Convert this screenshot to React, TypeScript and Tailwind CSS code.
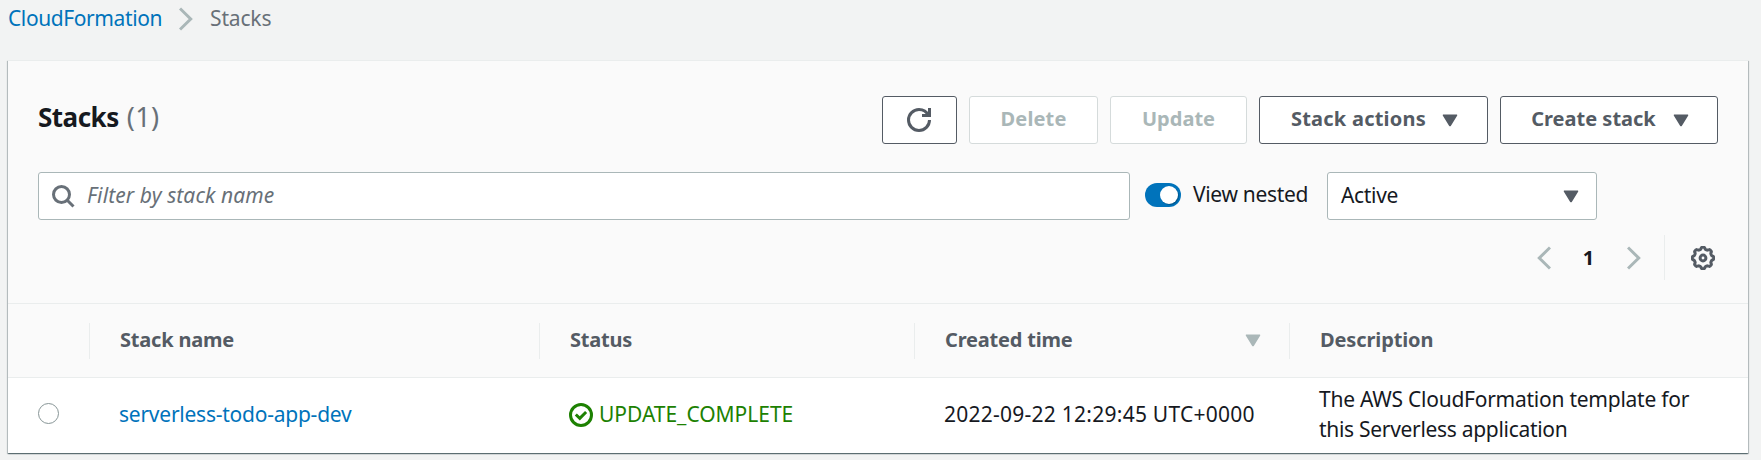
import React from "react";

function Caret({ className }: { className: string }) {
  return (
    <svg viewBox="0 0 16 13" className={`h-[13px] w-4 shrink-0 ${className}`} fill="currentColor">
      <path d="M1.5 0.5h13c.8 0 1 .7.6 1.2L8.8 11.9c-.4.6-1.2.6-1.6 0L.9 1.7C.5 1.2.7.5 1.5 .5z" />
    </svg>
  );
}

function Chevron({ left = false }: { left?: boolean }) {
  return (
    <svg viewBox="0 0 14 24" className="h-6 w-3.5 shrink-0 text-[#aab7b8]" fill="none" stroke="currentColor" strokeWidth="3">
      <path d={left ? "M13 1.5L2.3 12L13 22.5" : "M1 1.5L11.7 12L1 22.5"} />
    </svg>
  );
}

function RefreshIcon() {
  return (
    <svg viewBox="0 0 16 16" className="size-6" fill="none" stroke="currentColor" strokeWidth="2">
      <path d="M15 8c0 3.87-3.13 7-7 7s-7-3.13-7-7 3.13-7 7-7c2.79 0 5.2 1.63 6.33 4" />
      <path d="M10 5h5V0" />
    </svg>
  );
}

function SearchIcon() {
  return (
    <svg viewBox="0 0 24 24" className="size-6 text-[#687078]" fill="none" stroke="currentColor" strokeWidth="3">
      <circle cx="10.5" cy="10.5" r="8" />
      <path d="M16 16l6.500 6.500" />
    </svg>
  );
}

function GearIcon() {
  const points = Array.from({ length: 96 }, (_, i) => {
    const a = (i / 96) * Math.PI * 2;
    const r = 9.8 + 0.9 * Math.tanh(2.5 * Math.cos(8 * a));
    return `${(12 + r * Math.cos(a)).toFixed(2)},${(12 + r * Math.sin(a)).toFixed(2)}`;
  }).join(" ");
  return (
    <svg viewBox="0 0 24 24" className="size-6 text-[#545b64]" fill="none" stroke="currentColor" strokeWidth="3">
      <polygon points={points} strokeLinejoin="round" />
      <circle cx="12" cy="12" r="2.900" />
    </svg>
  );
}

function CheckIcon() {
  return (
    <svg viewBox="0 0 24 24" className="size-6 shrink-0" fill="none" stroke="currentColor" strokeWidth="3">
      <circle cx="12" cy="12" r="10.500" />
      <path d="M6.800 11.500l4 3.800 6.300-6.300" />
    </svg>
  );
}

const button = "flex h-12 items-center justify-center rounded-[3px] border bg-white pb-0.5 text-[20px] font-bold";
const divider = "flex h-9 items-center border-l border-[#eaeded] pl-[30px] pb-0.5";

export default function App() {
  return (
    <div className="h-[460px] w-[1761px] overflow-hidden bg-[#f2f3f3] font-['Noto_Sans',sans-serif] text-[21px] leading-[30px] text-[#16191f]">
      <nav className="flex h-[60px] items-start pt-[3px] pl-2">
        <a className="w-[171px] tracking-[-0.4px] text-[#0073bb]">CloudFormation</a>
        <div className="pt-1"><Chevron /></div>
        <span className="pl-[17px] tracking-[-0.15px] text-[#687078]">Stacks</span>
      </nav>

      <main className="mr-[13px] ml-2 flex h-[393px] flex-col border-t border-[#eaeded] bg-white shadow-[0_1px_1px_0_rgba(0,28,36,0.4),1px_1px_1px_0_rgba(0,28,36,0.2),-1px_1px_1px_0_rgba(0,28,36,0.2)]">
        <section className="h-[242px] bg-[#fafafa] pr-[30px] pl-[30px]">
          <header className="flex items-start justify-between pt-[35px]">
            <h1 className="pt-[4px] text-[26px] leading-[34px] font-bold tracking-[-0.5px]">
              Stacks<span className="pl-2 text-[27px] font-normal tracking-[0.3px] text-[#687078]">(1)</span>
            </h1>
            <div className="flex gap-3 text-[#545b64]">
              <button className="flex h-12 w-[75px] items-center justify-center rounded-[3px] border border-[#545b64] bg-white pr-[1px]"><RefreshIcon /></button>
              <button className={`${button} w-[129px] border-[#d5dbdb] tracking-[0.15px] text-[#aab7b8]`}>Delete</button>
              <button className={`${button} w-[137px] border-[#d5dbdb] text-[#aab7b8]`}>Update</button>
              <button className={`${button} w-[229px] gap-4 border-[#545b64] pl-0.5 tracking-[0.24px]`}>Stack actions <Caret className="mt-0.5" /></button>
              <button className={`${button} w-[218px] gap-[17px] border-[#545b64] pl-0.5`}>Create stack <Caret className="mt-0.5" /></button>
            </div>
          </header>

          <div className="mt-7 flex h-12 items-center">
            <div className="flex h-12 w-[1092px] items-center rounded-[3px] border border-[#aab7b8] bg-white pl-3">
              <SearchIcon />
              <span className="pb-0.5 pl-3 tracking-[0.1px] text-[#687078] italic">Filter by stack name</span>
            </div>
            <div className="mb-0.5 ml-[15px] flex h-6 w-9 items-center justify-end rounded-full bg-[#0073bb] pr-[3px]">
              <div className="size-[18px] rounded-full bg-white shadow-[1px_1px_1px_rgba(0,0,0,0.25)]" />
            </div>
            <span className="w-[146px] pb-1 pl-3 tracking-[-0.33px]">View nested</span>
            <div className="flex h-12 w-[270px] items-center justify-between rounded-[3px] border border-[#aab7b8] bg-white pr-[17px] pl-[13px]">
              <span className="pb-0.5 tracking-[-0.34px]">Active</span>
              <Caret className="text-[#545b64]" />
            </div>
          </div>

          <div className="mt-[15px] flex h-[45px] items-center justify-end">
            <Chevron left />
            <span className="w-[76px] pr-px text-center text-[20px] font-bold">1</span>
            <Chevron />
            <div className="ml-[23px] flex h-[45px] items-center border-l border-[#eaeded] pr-[3px] pl-[26px]"><GearIcon /></div>
          </div>
        </section>

        <section className="grid h-[75px] shrink-0 grid-cols-[81px_450px_375px_375px_1fr] items-center border-y border-[#eaeded] bg-[#fafafa] text-[20px] font-bold text-[#545b64]">
          <div />
          <div className={`${divider} tracking-[-0.2px]`}>Stack name</div>
          <div className={`${divider} tracking-[-0.2px]`}>Status</div>
          <div className={`${divider} justify-between pr-7 tracking-[-0.2px]`}>Created time<Caret className="mt-0.5 text-[#aab7b8]" /></div>
          <div className={`${divider} tracking-[-0.12px]`}>Description</div>
        </section>

        <section className="grid flex-1 grid-cols-[81px_450px_375px_375px_1fr]">
          <div className="pt-[25px] pl-[30px]"><div className="size-[21px] rounded-full border-[1.5px] border-[#879596]" /></div>
          <a className="pt-[21px] pl-[30px] tracking-[-0.24px] text-[#0073bb]">serverless-todo-app-dev</a>
          <div className="flex items-start pt-[21px] pl-[30px] text-[#1d8102]"><div className="pt-1"><CheckIcon /></div><span className="pl-1.5 tracking-[-0.03px]">UPDATE_COMPLETE</span></div>
          <div className="pt-[21px] pl-[30px] tracking-[0.25px]">2022-09-22 12:29:45 UTC+0000</div>
          <div className="pt-1.5 pl-[30px]">
            <div className="tracking-[-0.25px]">The AWS CloudFormation template for</div>
            <div className="tracking-[-0.3px]">this Serverless application</div>
          </div>
        </section>
      </main>
    </div>
  );
}
